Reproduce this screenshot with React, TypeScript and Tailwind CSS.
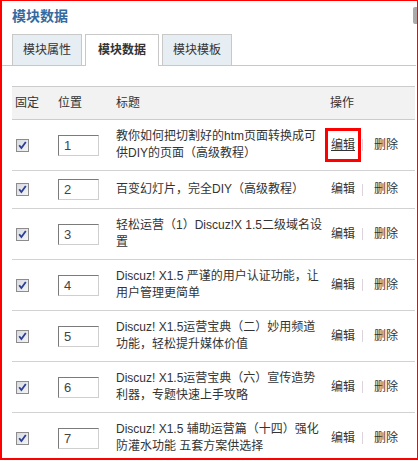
import React from "react";

type Row = { pos: number; lines: string[] };

const rows: Row[] = [
  { pos: 1, lines: ["教你如何把切割好的htm页面转换成可", "供DIY的页面（高级教程）"] },
  { pos: 2, lines: ["百变幻灯片，完全DIY（高级教程）"] },
  { pos: 3, lines: ["轻松运营（1）Discuz!X 1.5二级域名设", "置"] },
  { pos: 4, lines: ["Discuz! X1.5 严谨的用户认证功能，让", "用户管理更简单"] },
  { pos: 5, lines: ["Discuz! X1.5运营宝典（二）妙用频道", "功能，轻松提升媒体价值"] },
  { pos: 6, lines: ["Discuz! X1.5运营宝典（六）宣传造势", "利器，专题快速上手攻略"] },
  { pos: 7, lines: ["Discuz! X1.5 辅助运营篇（十四）强化", "防灌水功能 五套方案供选择"] },
];

function CheckBox() {
  return (
    <svg width="13" height="13" viewBox="0 0 13 13">
      <defs>
        <linearGradient id="cb" x1="0" y1="0" x2="1" y2="1">
          <stop offset="0" stopColor="#d6d9e0" />
          <stop offset="1" stopColor="#f6f6f6" />
        </linearGradient>
      </defs>
      <rect x="0.5" y="0.5" width="12" height="12" fill="url(#cb)" stroke="#8c8c8c" />
      <path d="M3.2 6.2 L5.4 9 L9.8 3" stroke="#2c3f94" strokeWidth="1.8" fill="none" />
    </svg>
  );
}

function Tab({ label, active }: { label: string; active?: boolean }) {
  if (active) {
    return (
      <div className="relative mb-[-1px] flex h-[32px] w-[74px] items-start justify-center border border-b-0 border-[#c8c8c8] bg-white pt-[7px] text-[12px] font-bold leading-[17px] text-[#333]">
        {label}
      </div>
    );
  }
  return (
    <div className="flex h-[31px] w-[70px] items-start justify-center border border-b-0 border-[#c8c8c8] bg-[#e6edf3] pt-[7px] text-[12px] leading-[17px] text-[#333]">
      {label}
    </div>
  );
}

export default function App() {
  return (
    <div
      className="relative h-[460px] w-[418px] overflow-hidden border-t border-r border-b-2 border-l-2 border-[#ff0000] bg-white text-[#333]"
      style={{ fontFamily: '"Liberation Sans", "Noto Sans CJK SC", sans-serif' }}
    >
      <div className="absolute top-[6px] right-0 h-[17px] w-[4px] rounded-l-[2px] bg-[#ababab]" />

      <div className="pl-[10px] pt-[5px] text-[14px] font-bold leading-[20px] text-[#366a9f]">模块数据</div>

      <div className="mt-[8px] flex h-[32px] w-[414px] items-end gap-[3px] border-b border-[#c8c8c8] pl-[10px]">
        <Tab label="模块属性" />
        <Tab label="模块数据" active />
        <Tab label="模块模板" />
      </div>

      <div className="ml-[10px] mt-[20px] w-[403px] text-[12px] leading-[17px]">
        <div className="grid h-[34px] grid-cols-[42px_58px_214px_1fr] items-center border-y border-[#cccccc] bg-[#f2f2f2]">
          <div className="pl-[3px]">固定</div>
          <div className="pl-[4px]">位置</div>
          <div className="pl-[4px]">标题</div>
          <div className="pl-[4px]">操作</div>
        </div>

        {rows.map((r, i) => (
          <div
            key={r.pos}
            className="grid grid-cols-[42px_58px_214px_1fr] items-center border-b border-[#d2d2d2] py-[8px]"
          >
            <div className="flex pl-[4px]">
              <CheckBox />
            </div>
            <div className="pl-[4px]">
              <div className="h-[21px] w-[41px] border border-t-[#7b7b7b] border-l-[#7b7b7b] border-r-[#cfcfcf] border-b-[#cfcfcf] pl-[5px] text-[13px] leading-[19px] text-[#444]">
                {r.pos}
              </div>
            </div>
            <div className="whitespace-nowrap pl-[4px]">
              {r.lines.map((l) => (
                <div key={l}>{l}</div>
              ))}
            </div>
            <div className="flex items-center whitespace-nowrap pl-[5px]">
              {i === 0 ? (
                <span className="relative underline">
                  编辑
                  <span className="absolute top-[-9px] right-[-6px] bottom-[-8px] left-[-6px] border-[3px] border-[#ff0000]" />
                </span>
              ) : (
                <span>编辑</span>
              )}
              <span className="ml-[7px] mr-[11px] inline-block h-[12px] w-px bg-[#ddd3dc]" />
              <span>删除</span>
            </div>
          </div>
        ))}
      </div>
    </div>
  );
}
